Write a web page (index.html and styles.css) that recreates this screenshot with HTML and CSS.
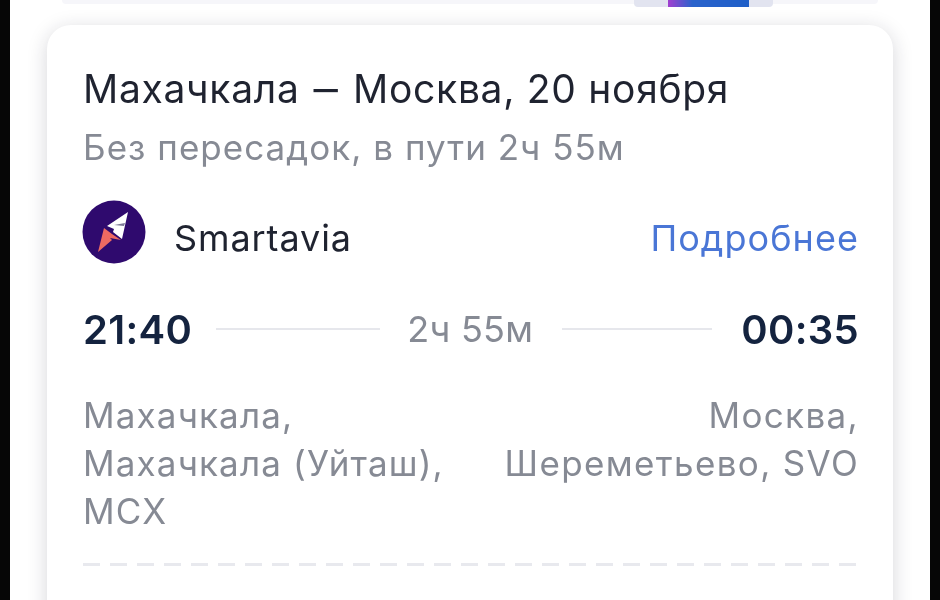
FILE: index.html
```html
<!DOCTYPE html>
<html lang="en">
<head>
    <meta charset="UTF-8">
    <title>Рейс</title>
    <link rel="stylesheet" href="styles.css">
</head>
<body>
    <div class="screen">
        <div class="prev-card">
            <div class="prev-thumb"><div class="prev-pic"></div></div>
        </div>
        <div class="card">
            <h1 class="title">Махачкала <span class="title-dash">–</span> Москва, 20 ноября</h1>
            <div class="subtitle">Без пересадок, в пути 2ч 55м</div>
            <div class="airline">
                <svg class="logo" viewBox="0 0 64 64">
                    <circle cx="32" cy="32" r="31.5" fill="#2f0a6e"/>
                    <path d="M46 12L25 26l7 3-1 3 9 7z" fill="#fff"/>
                    <path d="M22 28l8 6 9 6-11-2 2 2-14 12z" fill="#ee6a62"/>
                    <path d="M32 25l11-2-1 3z" fill="#7d7a96"/>
                </svg>
                <span class="airline-name">Smartavia</span>
                <a class="more">Подробнее</a>
            </div>
            <div class="times">
                <span class="time">21:40</span>
                <span class="line line-left"></span>
                <span class="duration">2ч 55м</span>
                <span class="line line-right"></span>
                <span class="time">00:35</span>
            </div>
            <div class="places">
                <div class="place">Махачкала,<br>Махачкала (Уйташ),<br>MCX</div>
                <div class="place place-to">Москва,<br>Шереметьево, SVO</div>
            </div>
            <div class="dashes"></div>
        </div>
    </div>
</body>
</html>
```

FILE: styles.css
```css
html, body {
    margin: 0;
    height: 600px;
    overflow: hidden;
    background-color: #060606;
}

/* the source is a soft, upscaled phone capture */
.screen {
    box-sizing: border-box;
    width: 920px;
    height: 600px;
    margin: 0 10px;
    padding: 0 37px;
    background-color: #fff;
    overflow: hidden;
    font-family: Inter, "Noto Sans", sans-serif;
    filter: blur(0.5px);
}

.prev-card {
    display: flex;
    justify-content: flex-end;
    height: 4px;
    margin: 0 15px 21px;
    padding-right: 105px;
    background-color: #f6f6fa;
    border-radius: 0 0 12px 12px;
}

.prev-thumb {
    display: flex;
    flex-shrink: 0;
    width: 139px;
    height: 7px;
    padding-left: 34px;
    box-sizing: border-box;
    background-color: #e2e4f0;
    border-radius: 0 0 4px 4px;
}

.prev-pic {
    width: 81px;
    height: 7px;
    background: linear-gradient(90deg, #a23fd0, #2a63cc 30%, #1f5fc8);
}

.card {
    height: 640px;
    padding: 42px 34px 0 36px;
    background-color: #fff;
    border-radius: 24px;
    box-shadow: 0 4px 20px rgba(30, 30, 50, 0.18);
}

.title {
    margin: 0;
    font-size: 39px;
    line-height: 44px;
    font-weight: 400;
    letter-spacing: 0.7px;
    color: #1f2330;
}

.title-dash {
    display: inline-block;
    transform: scaleX(1.25);
    margin: 0 5px;
}

.subtitle {
    margin-top: 16px;
    font-size: 35px;
    line-height: 40px;
    letter-spacing: 1.03px;
    color: #868a94;
}

.airline {
    display: flex;
    align-items: center;
    margin-top: 33px;
}

.logo {
    width: 64px;
    height: 64px;
    margin-left: -1px;
}

.airline-name {
    margin-left: 28px;
    padding-top: 12px;
    font-size: 36px;
    letter-spacing: 0.9px;
    color: #1f2330;
}

.more {
    margin-left: auto;
    padding-top: 12px;
    font-size: 36px;
    letter-spacing: 1.05px;
    color: #4a76d6;
}

.times {
    display: flex;
    align-items: center;
    margin-top: 35px;
    height: 60px;
}

.time {
    font-size: 40px;
    font-weight: 600;
    letter-spacing: 0.3px;
    color: #14233f;
}

.line {
    height: 2px;
    background-color: #e6e7ec;
}

.line-left {
    flex: 0 0 164px;
    margin: 0 27px 0 24px;
}

.line-right {
    flex: 1;
    margin: 0 29px 0 29px;
}

.duration {
    font-size: 36px;
    letter-spacing: 0.3px;
    color: #868a94;
}

.places {
    display: flex;
    justify-content: space-between;
    margin-top: 32px;
    font-size: 35px;
    line-height: 48px;
    letter-spacing: 1.15px;
    color: #868a94;
}

.place-to {
    text-align: right;
    letter-spacing: 1.35px;
}

.dashes {
    height: 3px;
    margin-top: 28px;
    background: repeating-linear-gradient(90deg, #e8e9ee 0 17px, transparent 17px 27px);
}
```
